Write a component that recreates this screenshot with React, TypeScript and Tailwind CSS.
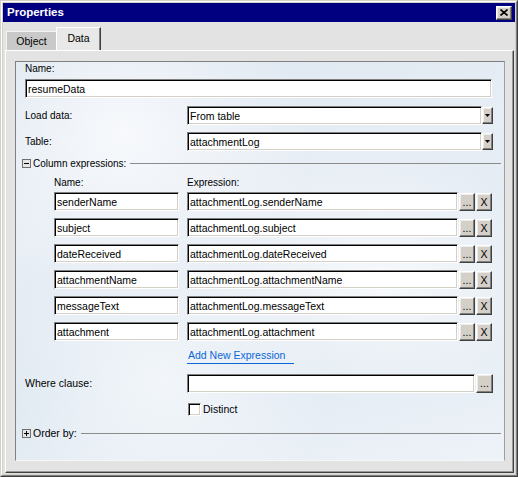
import React from "react";

const font = "font-['Liberation_Sans',Arial,sans-serif]";
const sunken =
  "bg-white border border-t-[#808080] border-l-[#808080] border-r-white border-b-white shadow-[inset_1px_1px_0_#000,inset_-1px_-1px_0_#d4d0c8]";
const raised =
  "bg-[#d4d0c8] border border-t-white border-l-white border-r-[#404040] border-b-[#404040] shadow-[inset_-1px_-1px_0_#808080,inset_1px_1px_0_#ececec]";

const expressions = [
  ["senderName", "attachmentLog.senderName"],
  ["subject", "attachmentLog.subject"],
  ["dateReceived", "attachmentLog.dateReceived"],
  ["attachmentName", "attachmentLog.attachmentName"],
  ["messageText", "attachmentLog.messageText"],
  ["attachment", "attachmentLog.attachment"],
];

const TextBox = ({ value, className }: { value: string; className: string }) => (
  <input
    readOnly
    defaultValue={value}
    className={`${sunken} h-[19px] pl-[2px] text-[10.5px] text-black outline-none ${className}`}
  />
);

const Btn = ({ label, className }: { label: string; className: string }) => (
  <button className={`${raised} flex items-center justify-center text-[10.5px] leading-none ${className}`}>
    {label}
  </button>
);

const Select = ({ value }: { value: string }) => (
  <div className="flex items-center">
    <TextBox value={value} className="w-[295px]" />
    <button className={`${raised} w-[11px] h-[17px] flex items-center justify-center`}>
      <svg width="5" height="3" viewBox="0 0 5 3">
        <polygon points="0,0 5,0 2.5,3" fill="#000" />
      </svg>
    </button>
  </div>
);

const Toggle = ({ open }: { open: boolean }) => (
  <div className="w-[9px] h-[9px] border border-[#6f6f6f] bg-[#e6e6e6] flex items-center justify-center">
    <svg width="5" height="5" viewBox="0 0 5 5">
      <rect x="0" y="2" width="5" height="1" fill="#000" />
      {!open && <rect x="2" y="0" width="1" height="5" fill="#000" />}
    </svg>
  </div>
);

const Section = ({ label, open, size }: { label: string; open: boolean; size: string }) => (
  <div className="h-[17px] ml-[-3px] mr-[3px] flex items-center">
    <Toggle open={open} />
    <span className={`ml-[2px] ${size} leading-[13px]`}>{label}</span>
    <div className="ml-[4px] flex-1 border-t border-[#8c8c8c]" />
  </div>
);

export default function App() {
  return (
    <div
      className={`w-[518px] h-[477px] ${font} text-black bg-[#d4d0c8] border border-t-[#d4d0c8] border-l-[#d4d0c8] border-r-[#404040] border-b-[#404040]`}
    >
      <div className="h-full flex flex-col p-[1px] border border-t-white border-l-white border-r-[#808080] border-b-[#808080]">
        {/* title bar */}
        <div className="h-[19px] bg-[#000080] flex items-center justify-between pl-[4px] pr-[3px]">
          <span className="text-white font-bold text-[11.5px] leading-none">Properties</span>
          <button className={`${raised} w-[16px] h-[14px] flex items-center justify-center`}>
            <svg width="8" height="7" viewBox="0 0 8 7">
              <path d="M0.5 0.5L7.5 6.5M7.5 0.5L0.5 6.5" stroke="#000" strokeWidth="1.6" />
            </svg>
          </button>
        </div>

        {/* body */}
        <div className="flex-1 bg-[#e3e3e3] pt-[5px] pl-[2px] pr-[1px] pb-[1px] flex flex-col">
          <div className="h-[23px] flex items-end">
            <div className="ml-[1px] w-[50px] h-[19px] bg-[#c9c9c9] border-t border-l border-[#f4f4f4] flex items-center justify-center text-[10.5px] pt-[2px]">
              Object
            </div>
            <div className="w-[45px] h-[23px] bg-[#e8e8e8] border-t border-l border-t-white border-l-white border-r border-r-[#404040] shadow-[inset_-1px_0_0_#808080] flex items-center justify-center text-[10.5px] pb-[1px]">
              Data
            </div>
          </div>

          <div className="flex-1 border border-t-white border-l-white border-r-[#404040] border-b-[#404040] shadow-[inset_-1px_-1px_0_#9a9a9a] pt-[10px] pl-[9px]">
            <div className="w-[490px] h-[400px] border border-t-[#808080] border-l-[#808080] border-r-[#a0a0a0] border-b-[#f6f6f6] pl-[9px] flex flex-col bg-[radial-gradient(ellipse_at_22%_18%,#f7f9fc_0%,transparent_35%),radial-gradient(ellipse_at_75%_55%,#f8fafc_0%,transparent_40%),radial-gradient(ellipse_at_30%_80%,#f2f6fa_0%,transparent_35%),linear-gradient(165deg,#dbe5ef_0%,#e8eef5_35%,#dfe8f1_65%,#eef3f8_100%)]">
              <div className="h-[17px] text-[10px] leading-[13px]">Name:</div>
              <TextBox value="resumeData" className="w-[467px]" />

              <div className="mt-[8px] h-[19px] flex items-center">
                <span className="w-[162px] text-[10px]">Load data:</span>
                <Select value="From table" />
              </div>
              <div className="mt-[7px] h-[19px] flex items-center">
                <span className="w-[162px] text-[10px]">Table:</span>
                <Select value="attachmentLog" />
              </div>

              <div className="mt-[4px]">
                <Section label="Column expressions:" open size="text-[10px]" />
              </div>

              <div className="mt-[4px] h-[16px] flex text-[10px] leading-[13px]">
                <span className="ml-[29px] w-[133px]">Name:</span>
                <span>Expression:</span>
              </div>

              <div className="flex flex-col gap-[7px]">
                {expressions.map(([name, expr]) => (
                  <div key={name} className="h-[19px] flex items-end">
                    <TextBox value={name} className="ml-[29px] w-[125px]" />
                    <TextBox value={expr} className="ml-[8px] w-[271px]" />
                    <Btn label="..." className="ml-[1px] w-[16px] h-[18px]" />
                    <Btn label="X" className="ml-[1px] w-[16px] h-[18px]" />
                  </div>
                ))}
              </div>

              <div className="mt-[8px] ml-[162px]">
                <a className="block w-[107px] pl-[1px] pb-[1px] border-b border-[#0b66d6] text-[#0b66d6] text-[10.5px] leading-[13px] cursor-pointer">
                  Add New Expression
                </a>
              </div>

              <div className="mt-[10px] h-[19px] flex items-center">
                <span className="w-[162px] text-[10.5px]">Where clause:</span>
                <TextBox value="" className="w-[288px]" />
                <Btn label="..." className="ml-[1px] w-[17px] h-[19px]" />
              </div>

              <div className="mt-[10px] h-[13px] flex items-center">
                <div className="ml-[163px] w-[13px] h-[13px] bg-white border border-t-[#808080] border-l-[#808080] border-r-white border-b-white shadow-[inset_1px_1px_0_#000,inset_-1px_-1px_0_#d4d0c8]" />
                <span className="ml-[2px] text-[10.5px]">Distinct</span>
              </div>

              <div className="mt-[9px]">
                <Section label="Order by:" open={false} size="text-[10.5px]" />
              </div>
            </div>
          </div>
        </div>
      </div>
    </div>
  );
}
